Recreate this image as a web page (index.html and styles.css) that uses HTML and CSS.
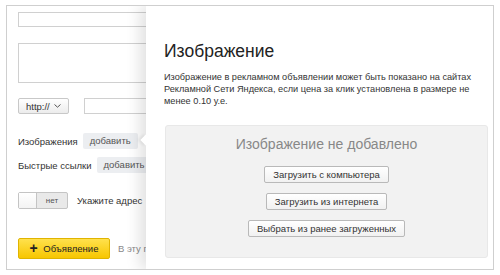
FILE: index.html
```html
<!DOCTYPE html>
<html lang="ru">
<head>
    <meta charset="UTF-8">
    <meta name="viewport" content="width=device-width, initial-scale=1.0">
    <title>Изображение</title>
    <link rel="stylesheet" href="styles.css">
</head>
<body>
    <div class="frame">
        <div class="ad-form">
            <div class="field field-title"></div>
            <div class="field field-text"></div>

            <div class="url-row">
                <button class="select">http://
                    <svg class="caret" width="7" height="4" viewBox="0 0 7 4"><path d="M0.5 0.5 L3.5 3.2 L6.5 0.5" fill="none" stroke="#555" stroke-width="1"/></svg>
                </button>
                <div class="field field-url"></div>
            </div>

            <div class="row row-images">
                <span class="label">Изображения</span>
                <span class="add-link">добавить</span>
            </div>
            <div class="row row-links">
                <span class="label">Быстрые ссылки</span>
                <span class="add-link">добавить</span>
            </div>

            <div class="row row-toggle">
                <span class="toggle">
                    <span class="knob"></span>
                    <span class="toggle-text">нет</span>
                </span>
                <span class="label">Укажите адрес</span>
            </div>

            <div class="row row-submit">
                <button class="add-ad"><b>+</b> Объявление</button>
                <span class="hint">В эту группу</span>
            </div>
        </div>

        <div class="popup">
            <span class="popup-tail"></span>
            <h1>Изображение</h1>
            <p class="popup-text">
                Изображение в рекламном объявлении может быть показано на сайтах<br>
                Рекламной Сети Яндекса, если цена за клик установлена в размере не<br>
                менее 0.10 у.е.
            </p>
            <div class="upload-box">
                <div class="upload-empty">Изображение не добавлено</div>
                <button class="upload-btn">Загрузить с компьютера</button>
                <button class="upload-btn">Загрузить из интернета</button>
                <button class="upload-btn">Выбрать из ранее загруженных</button>
            </div>
        </div>
    </div>
</body>
</html>
```

FILE: styles.css
```css
body {
    margin: 0;
    padding: 5px 6px;
    background: #fff;
    font-family: "Liberation Sans", Arial, sans-serif;
    color: #333;
}

.frame {
    position: relative;
    box-sizing: border-box;
    width: 488px;
    height: 265px;
    border: 1px solid #cfcfcf;
    overflow: hidden;
    background: #fff;
}

/* left form, mostly covered by the popup */
.ad-form {
    display: flex;
    flex-direction: column;
    align-items: flex-start;
    padding: 6px 0 0 11px;
}

.field {
    box-sizing: border-box;
    border: 1px solid #d0d0d0;
    background: #fff;
}

.field-title {
    width: 220px;
    height: 15px;
}

.field-text {
    width: 220px;
    height: 40px;
    margin-top: 16px;
}

.url-row {
    display: flex;
    align-items: center;
    margin-top: 15px;
}

.select {
    display: flex;
    align-items: center;
    gap: 4px;
    box-sizing: border-box;
    width: 51px;
    height: 16px;
    padding: 0 0 0 7px;
    border: 1px solid #c8c8c8;
    border-radius: 2px;
    background: linear-gradient(#fff, #ececec);
    font-family: inherit;
    font-size: 9.5px;
    color: #333;
}

.field-url {
    width: 120px;
    height: 16px;
    margin-left: 15px;
}

.row {
    display: flex;
    align-items: center;
    font-size: 9.5px;
}

.row-images {
    margin-top: 19px;
}

.row-links {
    margin-top: 8px;
}

.add-link {
    margin-left: 5px;
    padding: 0 7px;
    height: 16px;
    line-height: 16px;
    border-radius: 2px;
    background: #eceef1;
    color: #555;
}

.row-toggle {
    margin-top: 19px;
}

.toggle {
    box-sizing: border-box;
    display: flex;
    width: 50px;
    height: 17px;
    margin-right: 9px;
    border: 1px solid #c4c4c4;
    border-radius: 2px;
    background: #e9e9e9;
}

.knob {
    width: 17px;
    border-right: 1px solid #c4c4c4;
    background: linear-gradient(#fff, #f3f3f3);
}

.toggle-text {
    flex: 1;
    text-align: center;
    font-size: 8px;
    line-height: 15px;
    color: #555;
}

.row-submit {
    margin-top: 29px;
}

.add-ad {
    box-sizing: border-box;
    width: 92px;
    height: 21px;
    border: 1px solid #e0b400;
    border-radius: 2px;
    background: linear-gradient(#ffe14d, #f7c600);
    font-family: inherit;
    font-size: 9.5px;
    color: #222;
}

.add-ad b {
    font-size: 14px;
    line-height: 10px;
    margin-right: 3px;
    vertical-align: -1px;
}

.hint {
    margin-left: 8px;
    color: #888;
    white-space: nowrap;
}

/* popup lies over the form */
.popup {
    position: absolute;
    top: 0;
    right: 0;
    bottom: 0;
    left: 139px;
    padding: 34px 5px 0 18px;
    background: #fff;
    box-shadow: -6px 0 14px rgba(0, 0, 0, 0.12);
}

.popup-tail {
    position: absolute;
    left: -4px;
    top: 130px;
    width: 8px;
    height: 8px;
    background: #fff;
    transform: rotate(45deg);
    box-shadow: -2px 2px 3px rgba(0, 0, 0, 0.07);
}

.popup h1 {
    margin: 0;
    font-size: 17.5px;
    font-weight: normal;
    line-height: 22px;
    color: #222;
}

.popup-text {
    margin: 9px 0 0;
    font-size: 9.2px;
    line-height: 12px;
    white-space: nowrap;
    color: #333;
}

.upload-box {
    display: flex;
    flex-direction: column;
    align-items: center;
    box-sizing: border-box;
    width: 323px;
    height: 133px;
    margin: 18px 0 0 1px;
    padding-top: 10px;
    border: 1px solid #e8e8e8;
    border-radius: 3px;
    background: #f2f2f2;
}

.upload-empty {
    font-size: 14px;
    line-height: 16px;
    color: #888;
    margin-bottom: 14px;
}

.upload-btn {
    box-sizing: border-box;
    height: 17px;
    margin-bottom: 10px;
    padding: 0 8px;
    border: 1px solid #b9b9b9;
    border-radius: 2px;
    background: linear-gradient(#fff, #f1f1f1);
    font-family: inherit;
    font-size: 9.5px;
    color: #333;
}
```
